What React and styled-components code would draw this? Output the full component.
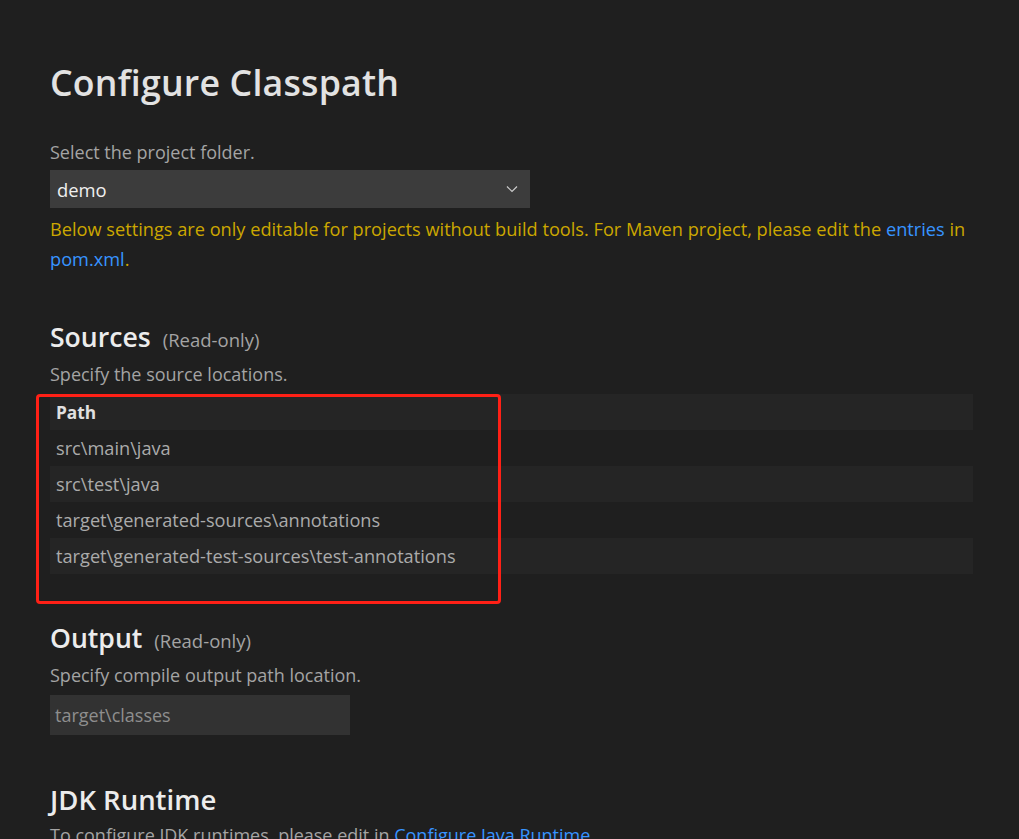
import React from "react";
import styled, { createGlobalStyle } from "styled-components";

const GlobalStyle = createGlobalStyle`
  html, body {
    margin: 0;
    padding: 0;
    background-color: #1f1f1f;
  }
  body {
    font-family: "Open Sans", "Noto Sans", sans-serif;
    color: #cccccc;
    overflow: hidden;
  }
`;

const paths = [
  "src\\main\\java",
  "src\\test\\java",
  "target\\generated-sources\\annotations",
  "target\\generated-test-sources\\test-annotations",
];

function App() {
  return (
    <>
      <GlobalStyle />
      <Page>
        <Title>Configure Classpath</Title>

        <Label>Select the project folder.</Label>
        <Select>
          <span>demo</span>
          <svg width="12" height="8" viewBox="0 0 12 8">
            <polyline points="1,1.5 6,6.5 11,1.5" fill="none" stroke="#cccccc" strokeWidth="1.2" />
          </svg>
        </Select>
        <Warning>
          Below settings are only editable for projects without build tools. For Maven project, please edit the{" "}
          <Link>entries</Link> in <Link>pom.xml</Link>.
        </Warning>

        <Heading $gap={46}>
          Sources <Note>(Read-only)</Note>
        </Heading>
        <Label $gap={5}>Specify the source locations.</Label>
        <TableWrap>
          <Table>
            <HeaderRow>Path</HeaderRow>
            {paths.map((p, i) => (
              <Row key={p} $alt={i % 2 === 1}>
                {p}
              </Row>
            ))}
          </Table>
          <Highlight />
        </TableWrap>

        <Heading $gap={47}>
          Output <Note>(Read-only)</Note>
        </Heading>
        <Label $gap={5}>Specify compile output path location.</Label>
        <OutputBox>target\classes</OutputBox>

        <Heading $gap={48} $size={27.5}>JDK Runtime</Heading>
        <Label $gap={6}>
          To configure JDK runtimes, please edit in <Link>Configure Java Runtime</Link>.
        </Label>
      </Page>
    </>
  );
}

export default App;

const Page = styled.div`
  padding: 60px 46px 0 50px;
  height: 839px;
  box-sizing: border-box;
`;

const Title = styled.h1`
  margin: 0;
  font-size: 35.7px;
  font-weight: 600;
  line-height: 44px;
  color: #e2e2e2;
  letter-spacing: 0.2px;
`;

const Label = styled.div`
  margin-top: ${(p) => (p.$gap != null ? p.$gap : 36)}px;
  font-size: 18px;
  line-height: 24px;
  color: #a4a4a4;
`;

const Select = styled.div`
  margin-top: 6px;
  width: 480px;
  height: 38px;
  box-sizing: border-box;
  padding: 0 12px 0 7px;
  display: flex;
  align-items: center;
  justify-content: space-between;
  background-color: #3c3c3c;
  color: #f0f0f0;
  font-size: 18.4px;
`;

const Warning = styled.div`
  margin-top: 6px;
  font-size: 18.2px;
  line-height: 30px;
  color: #cca700;
`;

const Link = styled.a`
  color: #3794ff;
  text-decoration: none;
  cursor: pointer;
`;

const Heading = styled.h2`
  margin: ${(p) => p.$gap}px 0 0;
  font-size: ${(p) => p.$size || 26.6}px;
  font-weight: 600;
  line-height: 34px;
  color: #ececec;
  display: flex;
  align-items: baseline;
  gap: 12px;
`;

const Note = styled.span`
  font-size: 18.5px;
  font-weight: 400;
  color: #a4a4a4;
`;

const TableWrap = styled.div`
  position: relative;
  margin-top: 8px;
`;

const Table = styled.div`
  display: flex;
  flex-direction: column;
`;

const HeaderRow = styled.div`
  height: 36px;
  display: flex;
  align-items: center;
  padding-left: 6px;
  background-color: #252525;
  font-size: 17.3px;
  font-weight: 700;
  color: #e0e0e0;
`;

const Row = styled.div`
  height: 36px;
  display: flex;
  align-items: center;
  padding-left: 6px;
  background-color: ${(p) => (p.$alt ? "#252525" : "#1f1f1f")};
  font-size: 18.2px;
  color: #ababab;
`;

const Highlight = styled.div`
  position: absolute;
  left: -14px;
  top: 0;
  width: 465px;
  height: 210px;
  box-sizing: border-box;
  border: 3px solid #ff2016;
  border-radius: 4px;
  pointer-events: none;
`;

const OutputBox = styled.div`
  margin-top: 8px;
  width: 300px;
  height: 40px;
  box-sizing: border-box;
  padding-left: 5px;
  display: flex;
  align-items: center;
  background-color: #323232;
  color: #8e8e8e;
  font-size: 18px;
`;
